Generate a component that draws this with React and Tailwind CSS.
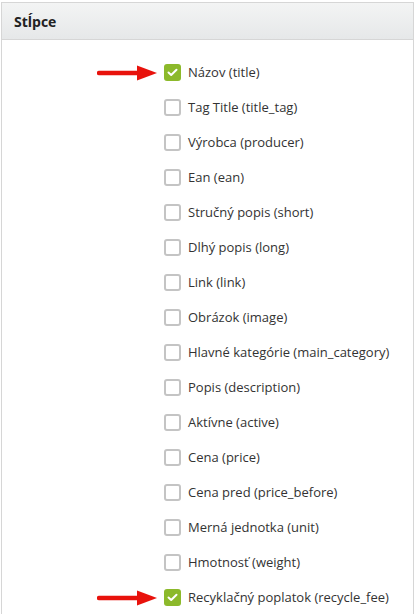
import { useState } from "react";

const columns = [
  { label: "Názov (title)", checked: true, arrow: true },
  { label: "Tag Title (title_tag)" },
  { label: "Výrobca (producer)" },
  { label: "Ean (ean)" },
  { label: "Stručný popis (short)" },
  { label: "Dlhý popis (long)" },
  { label: "Link (link)" },
  { label: "Obrázok (image)" },
  { label: "Hlavné kategórie (main_category)" },
  { label: "Popis (description)" },
  { label: "Aktívne (active)" },
  { label: "Cena (price)" },
  { label: "Cena pred (price_before)" },
  { label: "Merná jednotka (unit)" },
  { label: "Hmotnosť (weight)" },
  { label: "Recyklačný poplatok (recycle_fee)", checked: true, arrow: true },
];

const Arrow = () => (
  <svg width="62" height="18" viewBox="0 0 62 18" className="absolute left-[-67px] top-1/2 -translate-y-1/2">
    <path d="M2 9 H44" stroke="#e8120c" strokeWidth="4.5" strokeLinecap="round" />
    <path d="M40 1.5 L60 9 L40 16.5 Z" fill="#e8120c" />
  </svg>
);

const CheckRow = ({ label, checked, arrow, onToggle }) => (
  <label className="relative flex items-center h-[35px] cursor-pointer">
    {arrow && <Arrow />}
    <span
      className={`flex items-center justify-center w-[17px] h-[17px] rounded-[3px] shrink-0 ${
        checked ? "bg-[#8cb92b]" : "border-2 border-[#c4c4c4] bg-white"
      }`}
      onClick={onToggle}
    >
      {checked && (
        <svg width="11" height="9" viewBox="0 0 11 9">
          <path d="M1.5 4.5 L4.2 7 L9.5 1.8" stroke="white" strokeWidth="2" fill="none" strokeLinecap="round" strokeLinejoin="round" />
        </svg>
      )}
    </span>
    <span className="ml-[7px] text-[13px] text-[#333]">{label}</span>
  </label>
);

export default function App() {
  const [items, setItems] = useState(columns);

  const toggle = (i) =>
    setItems(items.map((it, idx) => (idx === i ? { ...it, checked: !it.checked } : it)));

  return (
    <div className="bg-white min-h-screen pt-[2px] pl-[1px] pr-[2px]" style={{ fontFamily: '"Open Sans", sans-serif' }}>
      <div className="border border-[#d6d6d6] border-b-0 h-[620px]">
        {/* Header */}
        <div className="h-[37px] flex items-center px-3 bg-gradient-to-b from-[#f3f4f4] to-[#e6e8e9] border-b border-[#d6d6d6]">
          <h2 className="text-[14px] font-bold text-[#222]">Stĺpce</h2>
        </div>

        {/* Stĺpce */}
        <div className="pl-[162px] pt-[15px]">
          {items.map((c, i) => (
            <CheckRow key={c.label} {...c} onToggle={() => toggle(i)} />
          ))}
        </div>
      </div>
    </div>
  );
}
